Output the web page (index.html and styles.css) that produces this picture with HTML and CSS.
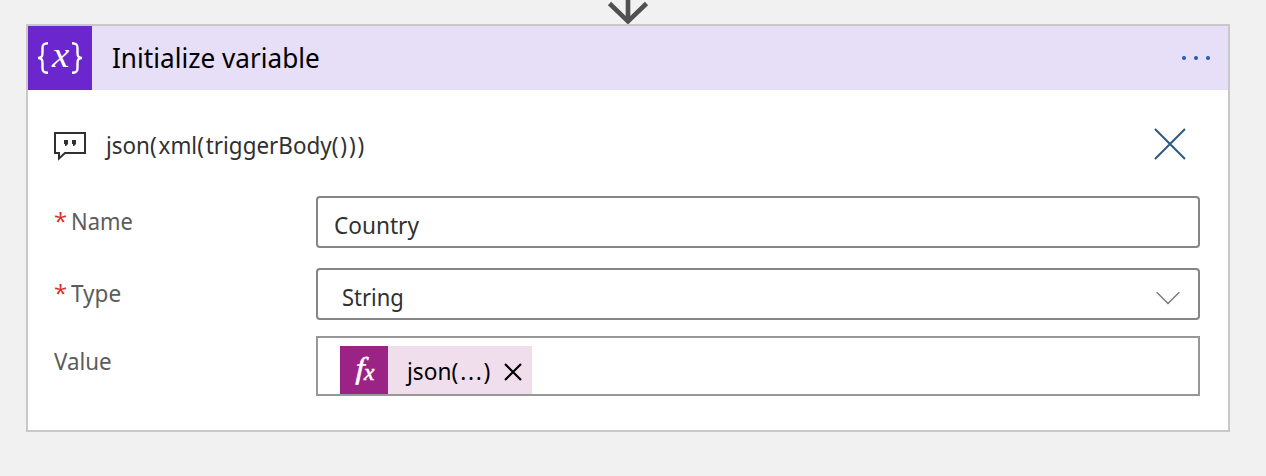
FILE: index.html
```html
<!DOCTYPE html>
<html lang="en">
<head>
<meta charset="utf-8">
<title>Initialize variable</title>
<link rel="stylesheet" href="styles.css">
</head>
<body>
<div class="connector">
  <svg class="arrow" width="44" height="24" viewBox="0 0 44 24"><path d="M22 0V21M3.500 3.500L22 21.300L40.500 3.500" fill="none" stroke="#505050" stroke-width="4.600"/></svg>
</div>
<main class="card">
  <header class="card-header">
    <div class="card-icon">
      <svg width="64" height="64" viewBox="0 0 64 64" fill="none" stroke="#fff" stroke-linecap="butt">
        <path d="M20 17.200C15.500 17.200 14.500 18.500 14.500 22V27C14.500 30.500 13.500 32 10 32C13.500 32 14.500 33.500 14.500 37V42C14.500 45.500 15.500 46.800 20 46.800M44 17.200C48.500 17.200 49.500 18.500 49.500 22V27C49.500 30.500 50.500 32 54 32C50.500 32 49.500 33.500 49.500 37V42C49.500 45.500 48.500 46.800 44 46.800" stroke-width="2.400"/>
        <text class="var-x" transform="translate(24 40.500) scale(1.080 1)">x</text>
      </svg>
    </div>
    <h1 class="title"><span>Initialize variable</span></h1>
    <div class="menu"><i></i><i></i><i></i></div>
  </header>
  <section class="note">
    <svg class="note-icon" width="34" height="30" viewBox="0 0 34 30"><path d="M2 2H32V22H12L6 27.500V22H2Z" fill="none" stroke="#303030" stroke-width="2"/><path d="M11 9h4v4l-2 2h-1v-2h-1zM19 9h4v4l-2 2h-1v-2h-1z" fill="#303030"/></svg>
    <p class="note-text"><span>json<em>(</em>xml<em>(</em>triggerBody<em>()))</em></span></p>
    <svg class="close" width="34" height="34" viewBox="0 0 34 34"><path d="M2 2L32 32M32 2L2 32" fill="none" stroke="#2d5a80" stroke-width="2"/></svg>
  </section>
  <section class="fields">
    <div class="row">
      <div class="label"><b>*</b><span class="name">Name</span></div>
      <div class="input"><span class="country">Country</span></div>
    </div>
    <div class="row">
      <div class="label"><b>*</b><span class="type">Type</span></div>
      <div class="input select"><span class="string">String</span>
        <svg width="24" height="14" viewBox="0 0 24 14"><path d="M.7 1.200L12 12.500L23.300 1.200" fill="none" stroke="#777" stroke-width="1.400"/></svg>
      </div>
    </div>
    <div class="row row-value">
      <div class="label"><span class="value">Value</span></div>
      <div class="input value-box">
        <div class="token">
          <div class="fx"><svg width="48" height="48" viewBox="0 0 48 48"><text class="fx-f" transform="translate(15.500 32) scale(1.050 1) skewX(-2)">f</text><text class="fx-x" transform="translate(24 34) scale(1.020 1)">x</text></svg></div>
          <div class="token-text"><span>json<em>(</em><em class="dots">...</em><em>)</em></span></div>
          <svg class="remove" width="18" height="18" viewBox="0 0 18 18"><path d="M1 1L17 17M17 1L1 17" fill="none" stroke="#000" stroke-width="2.200"/></svg>
        </div>
      </div>
    </div>
  </section>
</main>
</body>
</html>
```
FILE: styles.css
```css
* { box-sizing: border-box; }
body { margin: 0; width: 1266px; height: 476px; overflow: hidden; background: #f1f1f1; font-family: "Noto Sans", sans-serif; font-size: 24px; line-height: 32px; }
svg { display: block; flex: none; }
span { display: inline-block; white-space: nowrap; transform-origin: 0 50%; }
em { font-style: normal; letter-spacing: 2px; }
.connector { height: 24px; padding-left: 606px; }
.card { width: 1204px; height: 408px; margin-left: 26px; border: 2px solid #c8c8c8; background: #fff; }
.card-header { display: flex; align-items: center; height: 64px; background: #e7def7; }
.card-icon { width: 64px; height: 64px; background: #6b26cd; }
.var-x { font-family: "Liberation Serif", serif; font-size: 36px; font-style: italic; fill: #fff; stroke: none; }
.title { flex: 1; margin: 0 0 2px 20px; font-size: 28px; font-weight: 400; line-height: 40px; color: #000; }
.title span { transform: scaleX(.934); }
.menu { display: flex; gap: 8px; margin-right: 18px; }
.menu i { width: 4px; height: 4px; border-radius: 50%; background: #2359b0; }
.note { display: flex; height: 106px; padding: 37px 41px 0 25px; }
.note-icon { margin-top: 4px; }
.note-text { flex: 1; margin: 0 0 0 19px; padding-top: 2px; color: #303030; }
.note-text span { transform: scaleX(.934); }
.fields { display: grid; grid-template-rows: 52px 52px 60px; row-gap: 20px; padding: 0 28px 0 26px; }
.row { display: grid; grid-template-columns: 262px 884px; }
.row-value { margin-top: -4px; height: 60px; }
.label { display: flex; padding-top: 9px; color: #5c5c5c; }
.label b { width: 17px; font-family: "Open Sans", sans-serif; font-weight: 400; color: #dc2f2f; }
.name { transform: scaleX(.912); }
.type { transform: scaleX(.94); }
.value { transform: scaleX(.93); }
.country { transform: scaleX(.942); }
.string { transform: scaleX(.915); }
.input { height: 52px; padding: 11px 16px; border: 2px solid #858585; border-radius: 4px; color: #303030; }
.select { display: flex; justify-content: space-between; padding-left: 24px; padding-right: 18px; }
.select svg { margin-top: 10px; }
.value-box { height: 60px; padding: 8px 22px 0; border-color: #989898; border-radius: 0; }
.token { display: flex; width: 192px; height: 48px; background: #f0deec; color: #000; }
.fx { width: 48px; height: 48px; background: #9b2386; }
.fx text { font-family: "Liberation Serif", serif; font-style: italic; fill: #fff; stroke: #fff; stroke-width: .6px; }
.fx-f { font-size: 30px; }
.fx-x { font-size: 23px; }
.token-text { width: 97px; margin-left: 19px; padding-top: 9px; }
.token-text span { transform: scaleX(.945); }
.dots { letter-spacing: 1.8px; }
.remove { margin-top: 17px; }
```
